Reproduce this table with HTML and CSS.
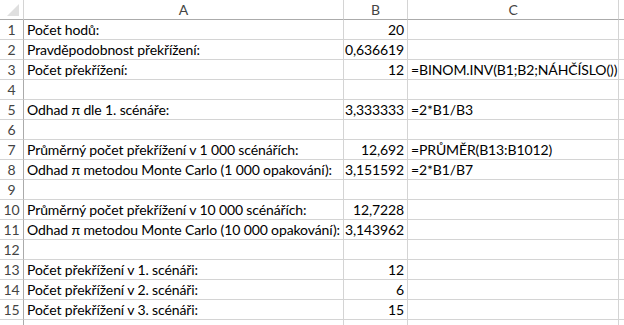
FILE: index.html
```html
<!DOCTYPE html>
<html lang="cs">
<head>
<meta charset="utf-8">
<title>List</title>
<link rel="stylesheet" href="styles.css">
</head>
<body>
<div class="sheet">
  <div class="hd corner"><span class="tri"></span></div>
  <div class="hd col">A</div>
  <div class="hd col">B</div>
  <div class="hd col">C</div>
  <div class="hd col last"></div>

  <div class="rh">1</div><div class="c">Počet hodů:</div><div class="c n">20</div><div class="c"></div><div class="c last"></div>
  <div class="rh">2</div><div class="c">Pravděpodobnost překřížení:</div><div class="c n">0,636619</div><div class="c"></div><div class="c last"></div>
  <div class="rh">3</div><div class="c">Počet překřížení:</div><div class="c n">12</div><div class="c">=BINOM.INV(B1;B2;NÁHČÍSLO())</div><div class="c last"></div>
  <div class="rh">4</div><div class="c"></div><div class="c n"></div><div class="c"></div><div class="c last"></div>
  <div class="rh">5</div><div class="c">Odhad π dle 1. scénáře:</div><div class="c n">3,333333</div><div class="c">=2*B1/B3</div><div class="c last"></div>
  <div class="rh">6</div><div class="c"></div><div class="c n"></div><div class="c"></div><div class="c last"></div>
  <div class="rh">7</div><div class="c">Průměrný počet překřížení v 1 000 scénářích:</div><div class="c n">12,692</div><div class="c">=PRŮMĚR(B13:B1012)</div><div class="c last"></div>
  <div class="rh">8</div><div class="c">Odhad π metodou Monte Carlo (1 000 opakování):</div><div class="c n">3,151592</div><div class="c">=2*B1/B7</div><div class="c last"></div>
  <div class="rh">9</div><div class="c"></div><div class="c n"></div><div class="c"></div><div class="c last"></div>
  <div class="rh">10</div><div class="c">Průměrný počet překřížení v 10 000 scénářích:</div><div class="c n">12,7228</div><div class="c"></div><div class="c last"></div>
  <div class="rh">11</div><div class="c">Odhad π metodou Monte Carlo (10 000 opakování):</div><div class="c n">3,143962</div><div class="c"></div><div class="c last"></div>
  <div class="rh">12</div><div class="c"></div><div class="c n"></div><div class="c"></div><div class="c last"></div>
  <div class="rh">13</div><div class="c">Počet překřížení v 1. scénáři:</div><div class="c n">12</div><div class="c"></div><div class="c last"></div>
  <div class="rh">14</div><div class="c">Počet překřížení v 2. scénáři:</div><div class="c n">6</div><div class="c"></div><div class="c last"></div>
  <div class="rh">15</div><div class="c">Počet překřížení v 3. scénáři:</div><div class="c n">15</div><div class="c"></div><div class="c last"></div>
  <div class="rh"></div><div class="c"></div><div class="c n"></div><div class="c"></div><div class="c last"></div>
</div>
</body>
</html>
```
FILE: styles.css
```css
html, body {
  margin: 0;
  padding: 0;
  background: #ffffff;
}
body {
  width: 624px;
  height: 325px;
  overflow: hidden;
}
.sheet {
  display: grid;
  grid-template-columns: 24px 320px 64px 211px 1fr;
  grid-auto-rows: 20px;
  font-family: Lato, "Liberation Sans", sans-serif;
  font-size: 14px;
  letter-spacing: -0.12px;
  color: #000000;
}
.sheet > div {
  box-sizing: border-box;
  border-right: 1px solid #d4d4d4;
  border-bottom: 1px solid #d4d4d4;
  display: flex;
  align-items: flex-end;
  white-space: nowrap;
  line-height: 16px;
  padding-bottom: 1px;
  overflow: visible;
}
.sheet > .last {
  border-right: none;
}
.hd {
  color: #444444;
  justify-content: center;
  border-bottom-color: #ababab !important;
}
.corner {
  position: relative;
}
.tri {
  position: absolute;
  left: 7px;
  top: 4px;
  width: 0;
  height: 0;
  border-left: 12px solid transparent;
  border-bottom: 12px solid #dfdfdf;
}
.rh {
  color: #444444;
  justify-content: center;
  border-right-color: #ababab !important;
}
.c {
  padding-left: 3px;
  padding-right: 3px;
}
.n {
  justify-content: flex-end;
}
```
